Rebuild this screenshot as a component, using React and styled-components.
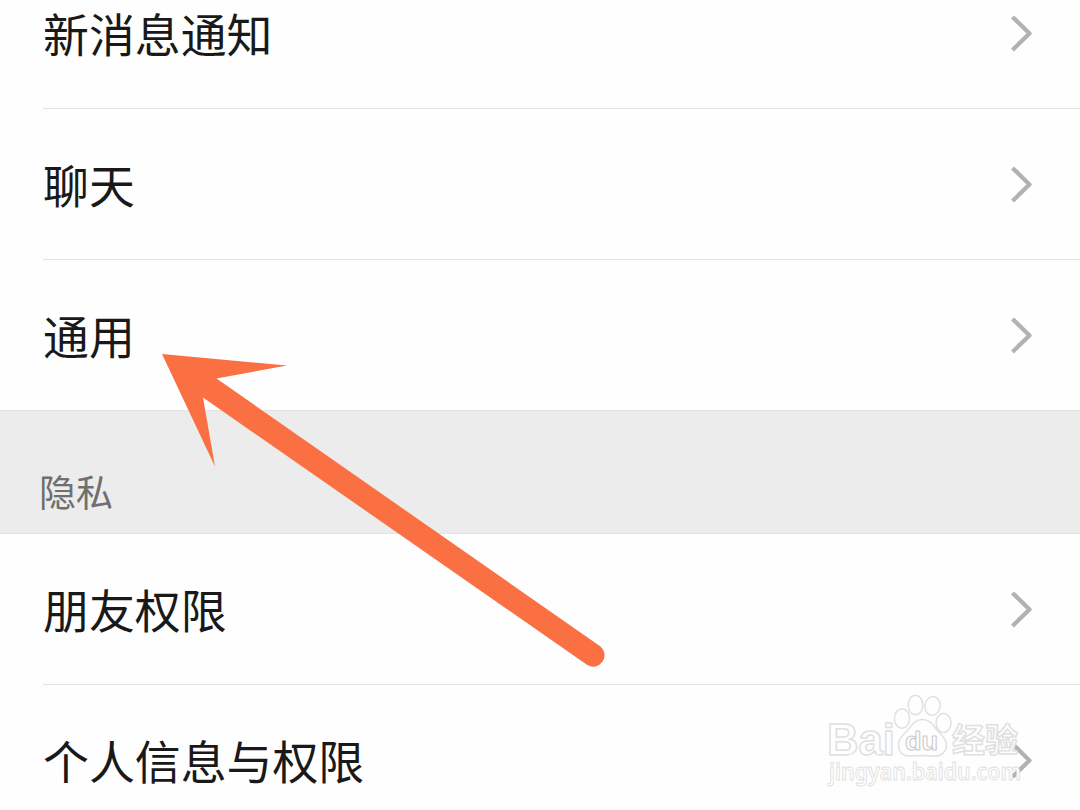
import React from 'react';
import styled, { createGlobalStyle } from 'styled-components';

const GlobalStyle = createGlobalStyle`
  body {
    margin: 0;
    background: #fefefe;
    font-family: 'Noto Sans CJK SC', sans-serif;
  }
`;

const Screen = styled.main`
  position: relative;
  width: 1080px;
  height: 810px;
  overflow: hidden;
  background: #fefefe;
`;

// The list is scrolled, so the first row is partly cut off
const Settings = styled.div`
  margin-top: -42px;
`;

const Row = styled.div`
  display: flex;
  align-items: center;
  justify-content: space-between;
  box-sizing: border-box;
  height: 151px;
  margin-left: ${p => (p.$last ? 0 : 43)}px;
  padding: 0 47px 0 ${p => (p.$last ? 43 : 0)}px;
  border-bottom: 1px solid ${p => (p.$last ? '#e4e4e4' : '#e1e1e1')};
`;

const Label = styled.span`
  padding-bottom: 2px;
  color: #191919;
  font-size: 45.9px;
  line-height: 66px;
  white-space: nowrap;
`;

const SectionTitle = styled.h2`
  display: flex;
  align-items: flex-end;
  box-sizing: border-box;
  height: 123px;
  margin: 0;
  padding: 0 0 15px 39px;
  border-bottom: 1px solid #e4e4e4;
  background: #ececec;
  color: #6f6f6f;
  font-size: 37px;
  font-weight: 400;
  line-height: 54px;
`;

const ChevronIcon = styled.svg`
  display: block;
  width: 22px;
  height: 38px;
  fill: none;
  stroke: #b2b2b2;
  stroke-width: 4.2;
  stroke-linejoin: round;
`;

const Pointer = styled.svg`
  position: absolute;
  top: 350px;
  left: 155px;
  width: 460px;
  height: 325px;
  fill: #fa7042;
`;

const Watermark = styled.svg`
  position: absolute;
  top: 690px;
  left: 820px;
  width: 220px;
  height: 114px;
  fill: #fefefe;
  stroke: #e0e0e0;
  stroke-width: 1.5;
  stroke-linejoin: round;
`;

const Chevron = () => (
  <ChevronIcon viewBox="0 0 22 38">
    <path d="M1.5 2.9 L18.5 19.4 L1.5 35.9" />
  </ChevronIcon>
);

const Item = ({ label, last }) => (
  <Row $last={last}>
    <Label>{label}</Label>
    <Chevron />
  </Row>
);

const general = ['新消息通知', '聊天', '通用'];
const privacy = ['朋友权限', '个人信息与权限'];

export default function App() {
  return (
    <Screen>
      <GlobalStyle />
      <Settings>
        {general.map((label, i) => (
          <Item key={label} label={label} last={i === general.length - 1} />
        ))}
        <SectionTitle>隐私</SectionTitle>
        {privacy.map(label => (
          <Item key={label} label={label} />
        ))}
      </Settings>

      <Pointer viewBox="155 350 460 325">
        <path d="M162 354 L287 365.5 L216.5 378.5 L600.5 646.5 A11.4 11.4 0 0 1 587.3 665 L203 397.5 L215 466.5 Z" />
      </Pointer>

      <Watermark viewBox="820 690 220 114">
        <text
          x="827"
          y="754.5"
          fontFamily="'Liberation Sans', sans-serif"
          fontSize="44"
          fontWeight="700"
          textLength="68"
          lengthAdjust="spacingAndGlyphs"
        >
          Bai
        </text>
        <ellipse cx="902" cy="718.5" rx="7.6" ry="9.8" />
        <ellipse cx="915.5" cy="705" rx="7.3" ry="9.8" />
        <ellipse cx="932.5" cy="706" rx="7.6" ry="9.5" transform="rotate(10 932.5 706)" />
        <ellipse cx="943.5" cy="723" rx="7.5" ry="9.5" />
        <path d="M922 719.5 C914 719.5 911 727 906 732 C901 737 898 740 898.5 746 C899 753 904 756.5 911 756 C917 755.5 926 755.5 933 756 C941 756.5 946.5 752 946.5 745 C946.5 738 941 735 937 730 C933 725 930 719.5 922 719.5 Z" />
        <text
          x="905"
          y="749.5"
          fontFamily="'Liberation Sans', sans-serif"
          fontSize="26"
          fontWeight="700"
          textLength="33"
          lengthAdjust="spacingAndGlyphs"
          strokeWidth="1.1"
          stroke="#cccccc"
        >
          du
        </text>
        <text
          x="952"
          y="752"
          fontFamily="'Noto Sans CJK SC', sans-serif"
          fontSize="33"
          fontWeight="700"
        >
          经验
        </text>
        <text
          x="829"
          y="780"
          fontFamily="'Noto Sans', sans-serif"
          fontSize="23.5"
          fontWeight="600"
          textLength="192"
          lengthAdjust="spacingAndGlyphs"
          strokeWidth="0.9"
        >
          jingyan.baidu.com
        </text>
      </Watermark>
    </Screen>
  );
}
